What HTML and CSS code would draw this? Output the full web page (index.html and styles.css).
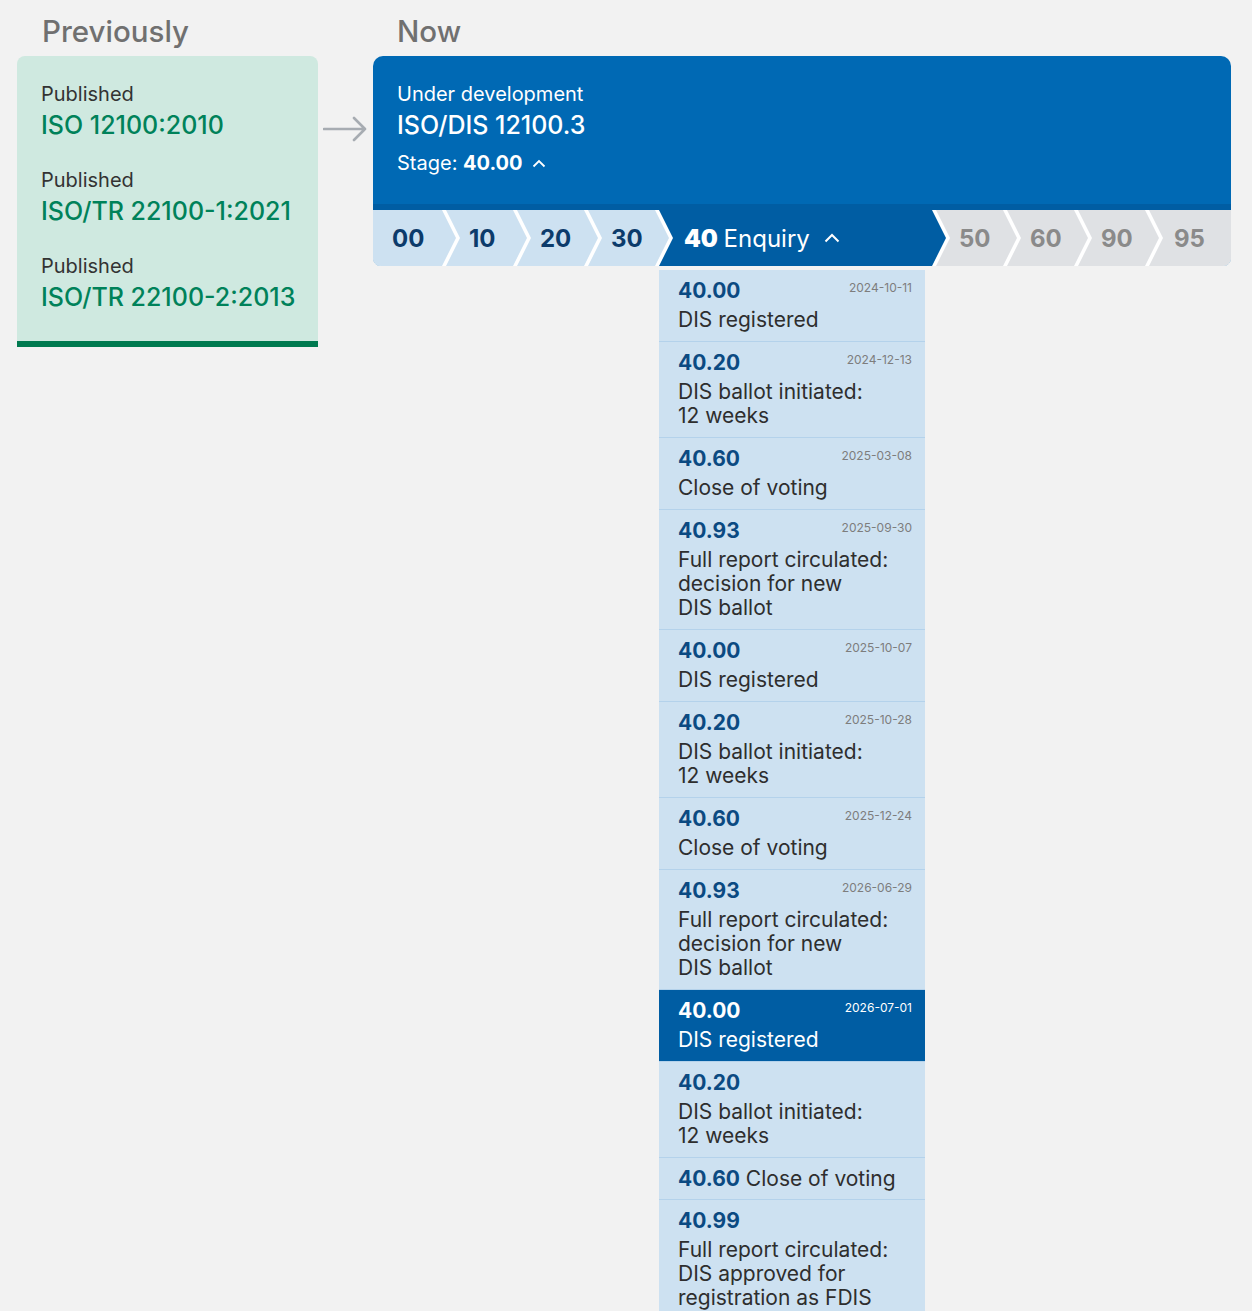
FILE: index.html
```html
<!DOCTYPE html>
<html>

<head>
    <meta charset="UTF-8">
    <title>ISO/DIS 12100.3 - Life cycle</title>
    <link rel="stylesheet" href="styles.css">
</head>

<body>
    <div class="timeline">
        <!-- Earlier editions -->
        <section class="col-prev">
            <h2 class="col-title">Previously</h2>
            <div class="prev-card">
                <div class="doc">
                    <div class="doc-status">Published</div>
                    <div class="doc-ref">ISO 12100:2010</div>
                </div>
                <div class="doc">
                    <div class="doc-status">Published</div>
                    <div class="doc-ref">ISO/TR 22100-1:2021</div>
                </div>
                <div class="doc">
                    <div class="doc-status">Published</div>
                    <div class="doc-ref">ISO/TR 22100-2:2013</div>
                </div>
            </div>
        </section>

        <div class="arrow">
            <svg width="45" height="26" viewBox="0 0 45 26">
                <path d="M1 13 H42 M31 2 L42 13 L31 24" fill="none" stroke="#a7acb2" stroke-width="2.6"
                    stroke-linecap="round" stroke-linejoin="round" />
            </svg>
        </div>

        <!-- Current project -->
        <section class="col-now">
            <h2 class="col-title">Now</h2>
            <div class="now-card">
                <div class="now-head">
                    <div class="doc-status">Under development</div>
                    <div class="doc-ref">ISO/DIS 12100.3</div>
                    <div class="stage-line">Stage: <b>40.00</b>
                        <svg class="caret" width="14" height="9" viewBox="0 0 14 9">
                            <path d="M1.5 7.5 L7 2 L12.5 7.5" fill="none" stroke="#fff" stroke-width="1.8" />
                        </svg>
                    </div>
                </div>
                <ol class="stages">
                    <li class="stage done first">00</li>
                    <li class="stage done">10</li>
                    <li class="stage done">20</li>
                    <li class="stage done">30</li>
                    <li class="stage active"><b>40</b>&nbsp;<span class="stage-name">Enquiry</span>
                        <svg class="caret-big" width="16" height="10" viewBox="0 0 16 10">
                            <path d="M1.5 8.5 L8 2 L14.5 8.5" fill="none" stroke="#fff" stroke-width="2" />
                        </svg>
                    </li>
                    <li class="stage todo">50</li>
                    <li class="stage todo">60</li>
                    <li class="stage todo">90</li>
                    <li class="stage todo last">95</li>
                </ol>
            </div>

            <!-- Sub-stages of 40 -->
            <ul class="history">
                <li class="event">
                    <div class="event-head"><span class="event-code">40.00</span><span class="event-date">2024-10-11</span></div>
                    <div class="event-text">DIS registered</div>
                </li>
                <li class="event">
                    <div class="event-head"><span class="event-code">40.20</span><span class="event-date">2024-12-13</span></div>
                    <div class="event-text">DIS ballot initiated: 12&nbsp;weeks</div>
                </li>
                <li class="event">
                    <div class="event-head"><span class="event-code">40.60</span><span class="event-date">2025-03-08</span></div>
                    <div class="event-text">Close of voting</div>
                </li>
                <li class="event">
                    <div class="event-head"><span class="event-code">40.93</span><span class="event-date">2025-09-30</span></div>
                    <div class="event-text">Full report circulated: decision for new DIS&nbsp;ballot</div>
                </li>
                <li class="event">
                    <div class="event-head"><span class="event-code">40.00</span><span class="event-date">2025-10-07</span></div>
                    <div class="event-text">DIS registered</div>
                </li>
                <li class="event">
                    <div class="event-head"><span class="event-code">40.20</span><span class="event-date">2025-10-28</span></div>
                    <div class="event-text">DIS ballot initiated: 12&nbsp;weeks</div>
                </li>
                <li class="event">
                    <div class="event-head"><span class="event-code">40.60</span><span class="event-date">2025-12-24</span></div>
                    <div class="event-text">Close of voting</div>
                </li>
                <li class="event">
                    <div class="event-head"><span class="event-code">40.93</span><span class="event-date">2026-06-29</span></div>
                    <div class="event-text">Full report circulated: decision for new DIS&nbsp;ballot</div>
                </li>
                <li class="event current">
                    <div class="event-head"><span class="event-code">40.00</span><span class="event-date">2026-07-01</span></div>
                    <div class="event-text">DIS registered</div>
                </li>
                <li class="event">
                    <div class="event-head"><span class="event-code">40.20</span></div>
                    <div class="event-text">DIS ballot initiated: 12&nbsp;weeks</div>
                </li>
                <li class="event inline">
                    <span class="event-code">40.60</span> Close of voting
                </li>
                <li class="event">
                    <div class="event-head"><span class="event-code">40.99</span></div>
                    <div class="event-text">Full report circulated: DIS approved for registration as FDIS</div>
                </li>
            </ul>
        </section>
    </div>
</body>

</html>
```

FILE: styles.css
```css
* {
    box-sizing: border-box;
}

body {
    margin: 0;
    background-color: #f2f2f2;
    font-family: Inter, "Noto Sans", sans-serif;
    color: #333333;
}

.timeline {
    display: flex;
    align-items: flex-start;
    padding: 13px 21px 0 17px;
}

.col-title {
    margin: 0 0 7px;
    padding-left: 25px;
    font-size: 29.5px;
    line-height: 36px;
    font-weight: 500;
    color: #707070;
}

/* Previously */
.col-prev {
    width: 301px;
    flex: none;
}

.prev-card {
    background-color: #cfe9e0;
    border-bottom: 6px solid #007a50;
    border-radius: 8px 8px 0 0;
    padding: 26px 20px 29px 24px;
}

.doc + .doc {
    margin-top: 28px;
}

.doc-status {
    font-size: 20px;
    line-height: 24px;
}

.doc-ref {
    margin-top: 4px;
    font-size: 25px;
    line-height: 30px;
    font-weight: 500;
    color: #00825a;
    white-space: nowrap;
}

.arrow {
    width: 55px;
    flex: none;
    padding: 103px 0 0 5px;
}

.arrow svg {
    display: block;
}

/* Now */
.col-now {
    flex: 1;
}

.col-now .col-title {
    padding-left: 24px;
}

.now-card {
    background-color: #0069b4;
    border-radius: 10px 10px 8px 8px;
    overflow: hidden;
    color: #ffffff;
}

.now-head {
    padding: 26px 24px 29px;
}

.now-head .doc-ref {
    color: #ffffff;
}

.stage-line {
    margin-top: 11px;
    font-size: 20px;
    line-height: 24px;
}

.caret {
    margin-left: 4px;
    vertical-align: 2px;
}

/* stage bar */
.stages {
    display: flex;
    margin: 0;
    padding: 0;
    list-style: none;
    background-color: #ffffff;
    border-top: 6px solid #005da3;
}

.stage {
    display: flex;
    align-items: center;
    flex: none;
    width: 81px;
    height: 56px;
    margin-left: -10px;
    padding-left: 23px;
    font-size: 24px;
    font-weight: 700;
    clip-path: polygon(0 0, calc(100% - 14px) 0, 100% 50%, calc(100% - 14px) 100%, 0 100%, 14px 50%);
}

.stage.first {
    width: 83px;
    margin-left: 0;
    padding-left: 19px;
    clip-path: polygon(0 0, calc(100% - 14px) 0, 100% 50%, calc(100% - 14px) 100%, 0 100%);
}

.stage.last {
    flex: 1;
    padding-left: 25px;
    clip-path: polygon(0 0, 100% 0, 100% 100%, 0 100%, 14px 50%);
}

.stage.done {
    background-color: #cde1f1;
    color: #0c3b6b;
}

.stage.todo {
    background-color: #dfe1e4;
    color: #8a8a8a;
}

.stage.active {
    width: 287px;
    padding-left: 25px;
    background-color: #005da3;
    color: #ffffff;
}

.stage-name {
    font-weight: 400;
}

.caret-big {
    margin-left: 14px;
}

/* sub-stage list */
.history {
    width: 266px;
    margin: 4px 0 0 286px;
    padding: 0;
    list-style: none;
}

.event {
    padding: 8px 13px 9px 19px;
    background-color: #cde1f1;
    border-top: 1px solid #b4d2eb;
}

.event:first-child {
    border-top: none;
}

.event-head {
    display: flex;
    justify-content: space-between;
    align-items: flex-start;
}

.event-code {
    font-size: 21px;
    line-height: 26px;
    font-weight: 700;
    color: #0b4a82;
}

.event-date {
    margin-top: 2px;
    font-size: 12px;
    line-height: 16px;
    color: #7d7d7d;
}

.event-text {
    margin-top: 4px;
    font-size: 21px;
    line-height: 24px;
    color: #2e2e2e;
}

.event.inline {
    padding-bottom: 7px;
    font-size: 21px;
    line-height: 26px;
    color: #2e2e2e;
}

.event.current {
    background-color: #005da3;
}

.event.current .event-code,
.event.current .event-date,
.event.current .event-text {
    color: #ffffff;
}
```
